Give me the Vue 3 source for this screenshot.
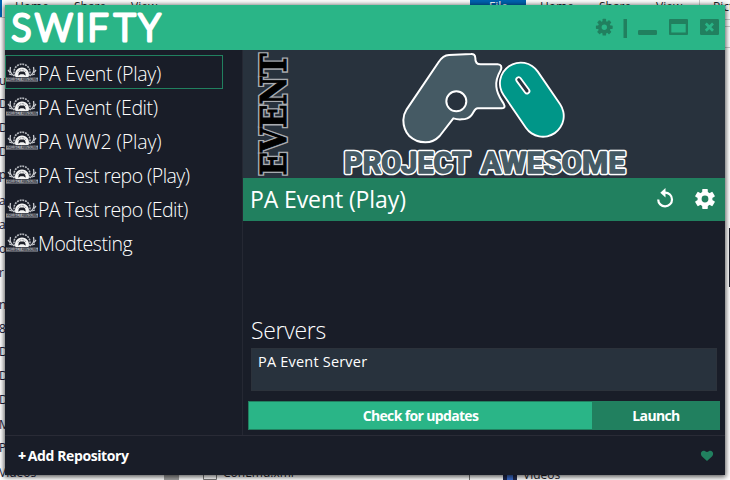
<script setup>
const repos = ['PA Event (Play)', 'PA Event (Edit)', 'PA WW2 (Play)', 'PA Test repo (Play)', 'PA Test repo (Edit)', 'Modtesting']
const tabs = [
  { t: 'Home', x: 15 }, { t: 'Share', x: 74 }, { t: 'View', x: 131 },
  { t: 'File', x: 489, on: true }, { t: 'Home', x: 540 }, { t: 'Share', x: 599 }, { t: 'View', x: 656 }, { t: 'Pict', x: 713 }
]
const names = [
  ['u', 81], ['D', 104], ['D', 128], ['D', 152], ['p', 175], ['a', 201], ['a', 225], ['o', 249], ['r', 273],
  ['n', 305], ['8', 329], ['D', 352], ['D', 376], ['D', 400], ['M', 425], ['P', 448], ['Videos', 473]
]
const spokes = [0, 45, 90, 135, 180, 225, 270, 315]
const teeth = [0, 60, 120, 180, 240, 300]
</script>

<template>
  <div class="desktop">
    <svg class="behind" width="730" height="480" viewBox="0 0 730 480">
      <rect width="730" height="17" fill="#fdfdfd" />
      <rect width="2" height="17" fill="#0063b1" />
      <path d="M0 17.5H5M699.500 0V5M725 19.500H730M725 26.500H730M725 47.500H730" stroke="#c9c9c9" />
      <rect x="470" width="56" height="5" fill="#0063b1" />
      <text v-for="(b, i) in tabs" :key="i" :x="b.x" y="11" :fill="b.on ? '#fff' : '#26262c'" class="desk-text">{{ b.t }}</text>
      <text v-for="(n, i) in names" :key="'n' + i" x="-1" :y="n[1] + 4" fill="#1b1b3a" class="desk-text">{{ n[0] }}</text>
      <rect x="164" y="474" width="15" height="6" fill="#a0a0a0" />
      <path d="M203.500 470V479.500H216.500V470M469.500 470V480" fill="none" stroke="#777" />
      <text x="223" y="477" class="desk-text" fill="#26262c">ConEmu.xml</text>
      <rect x="503" y="469" width="14" height="11" fill="#20294c" />
      <rect x="507" y="473" width="6" height="7" fill="#3b6bc9" />
      <text x="523" y="478.500" class="desk-text" fill="#26262c">Videos</text>
      <rect x="729" y="228" width="1" height="59" fill="#1b1d28" />
    </svg>

    <div class="window">
      <header class="titlebar">
        <svg class="brand" width="164" height="45" viewBox="5 5 164 45">
          <text x="11.500 35 75.500 87.500 114 138.500" y="41.300">SWIFTY</text>
        </svg>
        <svg class="controls" width="132" height="45" viewBox="593 5 132 45">
          <g fill="#21805f">
            <rect v-for="a in spokes" :key="a" x="602.500" y="18.800" width="3.600" height="5" rx=".7" :transform="`rotate(${a} 604.300 27.200)`" />
            <path fill-rule="evenodd" d="M598 27.200a6.300 6.300 0 1 0 12.600 0a6.300 6.300 0 1 0-12.600 0ZM601.600 27.200a2.700 2.700 0 1 1 5.400 0a2.700 2.700 0 1 1-5.400 0Z" />
            <rect x="623.500" y="19" width="3.500" height="19" />
            <rect x="638" y="30" width="19" height="5" rx="1.200" />
            <path fill-rule="evenodd" d="M670 19H687Q688 19 688 20V34Q688 35 687 35H670Q669 35 669 34V20Q669 19 670 19ZM671.300 24V32.500H685.700V24Z" />
            <rect x="700" y="19" width="19" height="16" rx="1.200" />
          </g>
          <path d="M705.800 23.500L713 30.700M713 23.500L705.800 30.700" stroke="#2ab587" stroke-width="2.700" />
        </svg>
      </header>

      <div class="body">
        <nav class="sidebar">
          <div v-for="(r, i) in repos" :key="r" class="repo" :class="{ active: i === 0 }">
            <svg class="emblem" width="32" height="20" viewBox="0 0 32 20">
              <g fill="none" stroke="#c9cbd0">
                <path d="M4.500 4Q3 9.500 8 13M27.500 4Q29 9.500 24 13" stroke-width="1.300" />
                <path d="M2 7L4.500 10M3 11L6 12M30 7L27.500 10M29 11L26 12" stroke-width="1.200" />
                <path d="M9 13A8 8 0 1 1 23 13" stroke="#b5b8be" stroke-width="1.600" stroke-dasharray="1.900 .9" />
              </g>
              <path d="M9.500 14A7 7 0 1 1 22.500 14Z" fill="#f4f4f4" />
              <path d="M11.800 9.500A4.500 4.500 0 0 1 20.200 9.500" fill="none" stroke="#7b7f88" stroke-width=".8" stroke-dasharray="2 .7" />
              <path d="M12.300 12.700Q12.500 9 14.200 8.600H17.800Q19.500 9 19.700 12.700L17.500 11.300H14.500Z" fill="#1d2029" />
              <rect y="14.500" width="32" height="4" fill="#a1a3aa" />
              <text x=".5" y="18" textLength="31" lengthAdjust="spacingAndGlyphs">PROJECT AWESOME</text>
            </svg>
            <span :class="'name-' + i">{{ r }}</span>
          </div>
        </nav>

        <main class="detail">
          <svg class="banner" width="482" height="128" viewBox="243 50 482 128">
            <g transform="translate(286.300 175.500) rotate(-90)" class="event">
              <text class="rim" textLength="122" lengthAdjust="spacingAndGlyphs" aria-hidden="true">EVENT</text>
              <text class="ink" textLength="122" lengthAdjust="spacingAndGlyphs">EVENT</text>
            </g>
            <g transform="translate(395 48) scale(.33333)" stroke-linejoin="round" stroke-linecap="round">
              <path d="M162 21L228 18Q240 17 241 30Q240 49 257 49H308Q324 50 317 67C306 86 302 97 304 116C306 139 316 151 326 167Q333 181 321 181H248C238 181 238 191 229 202Q219 214 200 214Q187 215 175 211L134 264Q116 283 91 283Q62 282 42 263Q25 244 25 216Q26 198 35 184L131 42Q144 22 162 21Z" fill="#455a64" stroke="#fff" stroke-width="6" />
              <circle cx="184" cy="160" r="30" fill="#28323d" stroke="#fff" stroke-width="6" />
              <path d="M377 106L444 204" stroke="#28323d" stroke-width="134" />
              <path d="M377 106L444 204" stroke="#fff" stroke-width="130" />
              <path d="M377 106L444 204" stroke="#009688" stroke-width="119" />
              <path d="M371 95L396 129" stroke="#fff" stroke-width="20" />
              <path d="M371 95L396 129" stroke="#28323d" stroke-width="9" />
            </g>
            <g class="project">
              <g v-for="k in ['halo', 'face']" :key="k" :class="k" :aria-hidden="k === 'halo'">
                <text x="344" y="173" textLength="126" lengthAdjust="spacingAndGlyphs">PROJECT</text>
                <text x="481" y="173" textLength="144" lengthAdjust="spacingAndGlyphs">AWESOME</text>
              </g>
            </g>
          </svg>

          <div class="repo-bar">
            <h1>PA Event (Play)</h1>
            <svg width="68" height="43" viewBox="653 178 68 43">
              <path d="M658.200 199.500A6.900 6.900 0 1 0 665 192.600" fill="none" stroke="#fff" stroke-width="2.200" />
              <path d="M665.500 188V197.500L660.300 192.700Z" fill="#fff" />
              <g fill="#fff">
                <rect v-for="a in teeth" :key="a" x="702.200" y="189" width="5.600" height="5" rx=".7" :transform="`rotate(${a} 705 199)`" />
                <path fill-rule="evenodd" d="M697.500 199a7.500 7.500 0 1 0 15 0a7.500 7.500 0 1 0-15 0ZM701.600 199a3.400 3.400 0 1 1 6.800 0a3.400 3.400 0 1 1-6.800 0Z" />
              </g>
            </svg>
          </div>

          <h2>Servers</h2>
          <div class="server">PA Event Server</div>
          <div class="actions">
            <button class="check">Check for updates</button>
            <button class="launch">Launch</button>
          </div>
        </main>
      </div>

      <footer class="footer">
        <span class="add"><b class="plus">+</b>Add Repository</span>
        <svg width="14" height="12" viewBox="0 0 14 12"><path d="M7 11L1.800 6.300C-.5 3.300 2-.5 5.200 1.200Q6.300 2 7 2Q7.700 2 8.800 1.200C12-.5 14.500 3.300 12.200 6.300Z" fill="#21805f" /></svg>
      </footer>
    </div>
  </div>
</template>

<style>
body { margin: 0; overflow: hidden; }
</style>

<style scoped>
.desktop { position: relative; width: 730px; height: 480px; padding: 5px; box-sizing: border-box; background: #fff; overflow: hidden; font-family: "Open Sans", "Noto Sans", sans-serif; color: #fff; }
.behind { position: absolute; left: 0; top: 0; }
.desk-text { font: 12px "Open Sans", sans-serif; }
.window { position: relative; display: flex; flex-direction: column; width: 720px; height: 470px; background: #191d28; box-shadow: 0 1px 5px 1px rgba(0, 0, 0, .65); }
.titlebar { display: flex; justify-content: space-between; height: 45px; background: #2ab587; }
.brand text { font: 300 37px Lato, sans-serif; fill: #fff; stroke: #fff; stroke-width: 3.200px; stroke-linejoin: round; }
.body { display: flex; height: 385px; }
.sidebar { width: 238px; padding-top: 5px; box-sizing: border-box; border-right: 1px solid #252833; flex: none; }
.repo { display: flex; align-items: center; width: 218px; height: 34px; box-sizing: border-box; border: 1px solid transparent; font-size: 19.5px; font-weight: 300; letter-spacing: -.3px; white-space: nowrap; }
.repo span { line-height: 32px; padding-top: 3px; }
.repo .name-1 { letter-spacing: -.4px; }
.repo .name-2 { letter-spacing: -.1px; }
.repo .name-3, .repo .name-4 { letter-spacing: -.55px; }
.repo .name-5 { letter-spacing: -.45px; }
.emblem { flex: none; margin-top: 2px; }
.repo.active { border-color: #21805f; }
.emblem text { font: bold 4.500px "Liberation Sans", sans-serif; fill: #34363f; }
.detail { display: flex; flex-direction: column; width: 482px; }
.banner { display: block; background: #28323d; }
.event text { font: bold 36px "DejaVu Serif", serif; stroke-linejoin: miter; }
.event .rim { fill: #a8abb0; stroke: #a8abb0; stroke-width: 4px; }
.event .ink { fill: #000; stroke: #000; stroke-width: 1px; }
.project text { font: 700 29.500px Roboto, sans-serif; stroke-linejoin: round; }
.halo text { fill: #fff; stroke: #fff; stroke-width: 4.500px; }
.face text { fill: #455a64; stroke: #455a64; stroke-width: 1.400px; }
.repo-bar { display: flex; justify-content: space-between; height: 43px; padding: 0 4px 0 7px; background: #21805f; }
h1 { margin: 0; font-size: 23px; line-height: 42px; font-weight: 400; letter-spacing: -.1px; }
h2 { margin: 92px 0 0 8px; font-size: 23px; line-height: 34px; font-weight: 300; letter-spacing: -.3px; }
.server { height: 43px; margin: 1px 8px 0; padding: 0 6px; box-sizing: border-box; border: 1px solid #2c323b; background: #28323d; font-size: 14.5px; letter-spacing: .2px; line-height: 26px; }
.actions { display: flex; height: 29px; margin: 10px 5px 0; }
button { padding: 0; border: 1px solid #21805f; color: #fff; font: 700 14px/26px "Open Sans", sans-serif; letter-spacing: -.65px; }
.check { width: 344px; background: #2ab587; border-right: 0; }
.launch { width: 128px; background: #21805f; }
.footer { display: flex; align-items: center; justify-content: space-between; height: 40px; padding: 0 11px 0 13px; box-sizing: border-box; border-top: 1px solid #292b36; font-size: 14px; font-weight: 700; letter-spacing: -.4px; }
.plus { margin-right: 2px; }
</style>
